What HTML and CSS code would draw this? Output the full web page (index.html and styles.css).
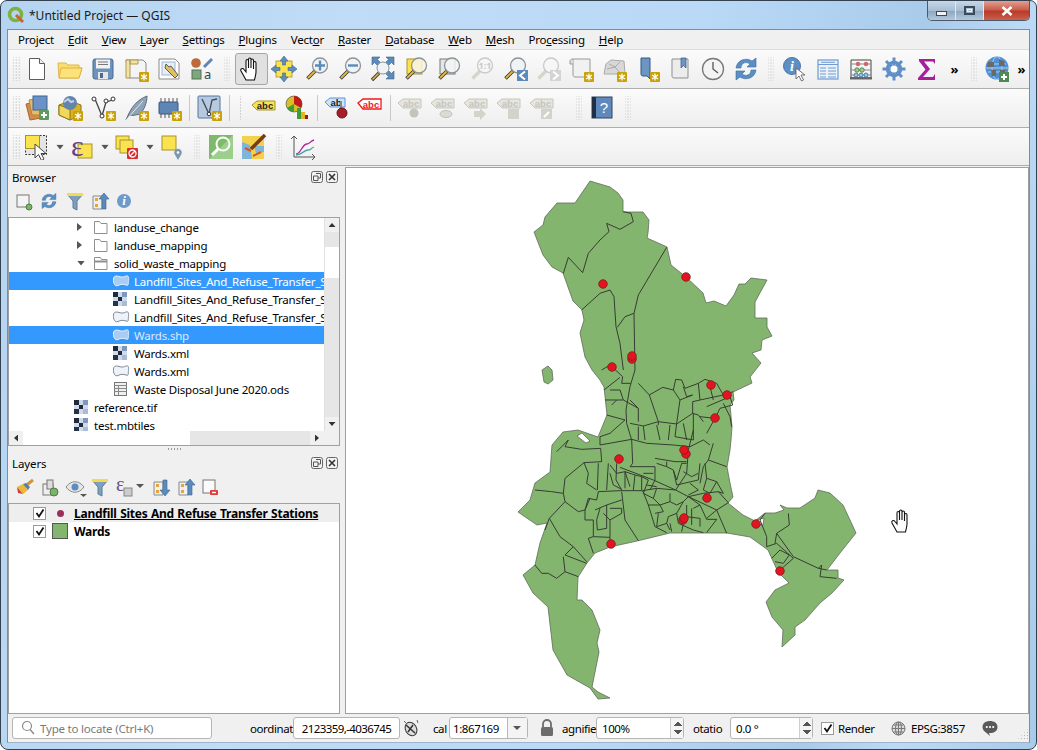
FILE: index.html
```html
<!DOCTYPE html>
<html lang="en">
<head>
	<meta charset="utf-8"/>
	<title>*Untitled Project — QGIS</title>
	<link rel="stylesheet" href="styles.css">
</head>
<body>
<svg class="defs" width="0" height="0">
	<symbol id="badge"><rect x="16" y="16" width="10" height="10" rx="1" fill="#c9a108"/><path d="M21 17.5v7M18 19l6 4M24 19l-6 4" stroke="#fff" stroke-width="1.3"/></symbol>
	<symbol id="lens"><path d="M11 15L3.5 22.5" stroke="#3a3a3a" stroke-width="3.6"/><path d="M10.5 15.5L4 22" stroke="#e6b93c" stroke-width="1.8"/><circle cx="16" cy="9.5" r="7.5" fill="#f0f3f4" stroke="#8d9499" stroke-width="1.3"/></symbol>
	<symbol id="lens-off"><path d="M11 15L3.5 22.5" stroke="#d5d5cc" stroke-width="3.4"/><circle cx="16" cy="9.5" r="7.5" fill="#f6f6f6" stroke="#c9c9c9" stroke-width="1.3"/></symbol>
	<symbol id="new"><path d="M5.5 2.5h10l5 5v16h-15z" fill="#fff" stroke="#5c5c5c"/><path d="M15.5 2.5v5h5" fill="#eee" stroke="#5c5c5c"/></symbol>
	<symbol id="open"><path d="M2 22L1 7h8l2 2h11v3l3 0-3 10z" fill="#fbdc6c" stroke="#dcb54a"/><path d="M2 22l2-10h21l-3 10z" fill="#fde27a" stroke="#dcb54a"/></symbol>
	<symbol id="save"><rect x="3" y="3" width="20" height="20" rx="2" fill="#6b93bd" stroke="#4a6a8f"/><rect x="6" y="3.5" width="14" height="9" fill="#f2f2f2"/><path d="M8 6h10M8 8.5h10" stroke="#777"/><rect x="8" y="16" width="10" height="7" fill="#e6e6e6"/><rect x="10" y="17" width="3" height="5" fill="#4a6a8f"/></symbol>
	<symbol id="layout"><path d="M3 4h17l3 3v15H6z" fill="#f4f4f4" stroke="#8a8a8a"/><path d="M3 4h4v18H3zM7 4h8v4H7z" fill="#f4e2a0" stroke="#a89a5c"/><use href="#badge"/></symbol>
	<symbol id="manager"><path d="M3 3h16l4 4v16H3z" fill="#fff" stroke="#8a8a8a"/><rect x="6" y="6" width="13" height="13" fill="#e6eef7" stroke="#9cb7d8"/><path d="M10 8l3 3 2-1 7 9-3 3-8-8-2-2z" fill="#e0c060" stroke="#5a5a5a"/></symbol>
	<symbol id="style"><circle cx="7" cy="7" r="4.8" fill="#bd6a3a"/><path d="M15 11L23 3" stroke="#5b86b8" stroke-width="3"/><rect x="3" y="14" width="9" height="9" fill="#7ea77a" stroke="#55705a"/><text x="15" y="23" class="icon-a">a</text></symbol>
	<symbol id="hand"><path d="M8 24L3 15C2 13 4.500 11.500 6 13.500L8 16V5C8 3 10.500 3 10.500 5V12 3.500C10.500 1.500 13 1.500 13 3.500V12 4.500C13 2.500 15.500 2.500 15.500 4.500V13 7C15.500 5 18 5 18 7V16C18 19 17 21 16.500 24z" fill="#fff" stroke="#111" stroke-width="1.1"/></symbol>
	<symbol id="pansel"><rect x="5" y="5" width="16" height="16" fill="#fbe34f" stroke="#b9a23b"/><path d="M13 0l4 5h-2.500v4h-3V5H9zM13 26l4-5h-2.500v-4h-3v4H9zM0 13l5-4v2.500h4v3H5V17zM26 13l-5-4v2.500h-4v3h4V17z" fill="#5f8dbc" stroke="#3d6690" stroke-width=".6"/></symbol>
	<symbol id="zoomin"><use href="#lens"/><path d="M11 9.500h10M16 4.500v10" stroke="#5b8abb" stroke-width="2.400"/></symbol>
	<symbol id="zoomout"><use href="#lens"/><path d="M11 9.500h10" stroke="#5b8abb" stroke-width="2.400"/></symbol>
	<symbol id="zoomfull"><path d="M2 1h8L7.500 3.500l3 3-3 3-3-3L2 9zM24 1h-8l2.500 2.500-3 3 3 3 3-3L24 9zM24 23h-8l2.500-2.500-3-3 3-3 3 3 2.500-2.500z" fill="#5b8abb" stroke="#3c648e" stroke-width=".6"/><path d="M2 24l7-7" stroke="#3a3a3a" stroke-width="3.400"/><path d="M2.500 23.500l6-6" stroke="#e6b93c" stroke-width="1.600"/><circle cx="13" cy="12" r="6" fill="#f0f3f4" stroke="#8d9499"/></symbol>
	<symbol id="zoomsel"><rect x="4" y="3" width="15" height="15" fill="#fbe34f" stroke="#a99434"/><path d="M11 15L3.500 22.500" stroke="#3a3a3a" stroke-width="3.600"/><path d="M10.500 15.500L4 22" stroke="#e6b93c" stroke-width="1.800"/><circle cx="16" cy="9.500" r="7.500" fill="#f6f5e8" fill-opacity=".85" stroke="#8d9499" stroke-width="1.300"/></symbol>
	<symbol id="zoomlayer"><rect x="4" y="3" width="15" height="15" fill="#e6e6e6" stroke="#777"/><path d="M11 15L3.500 22.500" stroke="#3a3a3a" stroke-width="3.600"/><path d="M10.500 15.500L4 22" stroke="#e6b93c" stroke-width="1.800"/><circle cx="16" cy="9.500" r="7.500" fill="#f3f4f4" fill-opacity=".85" stroke="#8d9499" stroke-width="1.300"/></symbol>
	<symbol id="zoom11"><use href="#lens-off"/><text x="16" y="13" class="icon-one">1:1</text></symbol>
	<symbol id="zoomlast"><use href="#lens"/><rect x="15" y="14" width="11" height="11" fill="#5b8abb"/><path d="M23 15.500l-5 4 5 4" fill="none" stroke="#fff" stroke-width="2"/></symbol>
	<symbol id="zoomnext"><use href="#lens-off"/><rect x="15" y="14" width="11" height="11" fill="#d4d4d4"/><path d="M18 15.500l5 4-5 4" fill="none" stroke="#fff" stroke-width="2"/></symbol>
	<symbol id="mapview"><path d="M5 3h17v18H7c-2 0-2-2-2-2z" fill="#f1f1f1" stroke="#999"/><path d="M5 3c-2 0-3 1-3 2v3h3" fill="#ddd" stroke="#999"/><use href="#badge"/></symbol>
	<symbol id="view3d"><path d="M5 8l5-4 13 1 1 13H3z" fill="#d8d8d8" stroke="#aaa"/><path d="M8 8l6 3 5-5M6 13l8-2 5 6" fill="none" stroke="#aaa"/><use href="#badge"/></symbol>
	<symbol id="bmnew"><path d="M7 2h9v21l-3-3H9c-2 0-2-2-2-2z" fill="#6a95c4" stroke="#39567a"/><use href="#badge"/></symbol>
	<symbol id="bmshow"><path d="M5 3h16v19H7c-2 0-2-2-2-2z" fill="#ececec" stroke="#8f8f8f"/><path d="M14 2h5v10l-2.500-2.500L14 12z" fill="#6a95c4" stroke="#39567a" stroke-width=".7"/></symbol>
	<symbol id="clock"><circle cx="13" cy="13" r="10.500" fill="#f3f3f3" stroke="#777" stroke-width="1.300"/><path d="M13 6v7l5 4" fill="none" stroke="#555" stroke-width="1.300"/></symbol>
	<symbol id="refresh"><path d="M3 12C4 4 13 1 19 5L23 2v9h-9l3-3C13 5 8 7 8 12z" fill="#5a8fc6" stroke="#39699c" stroke-width=".6"/><path d="M23 14C22 22 13 25 7 21L3 24v-9h9l-3 3c4 3 9 1 9-4z" fill="#5a8fc6" stroke="#39699c" stroke-width=".6"/></symbol>
	<symbol id="identify"><circle cx="10" cy="10" r="8.500" fill="#5e8fc4" stroke="#4a76a6"/><text x="10" y="15" class="icon-i">i</text><path d="M14 12v11l3-3 2.500 5 2-1-2.500-5h4z" fill="#fff" stroke="#555" stroke-width=".8"/></symbol>
	<symbol id="table"><rect x="3" y="4" width="20" height="19" fill="#eaf1f9" stroke="#6f9bd0" stroke-width="1.200"/><path d="M3 8.500h20M6 6.300h14M5 12h6M13 12h8M5 15h6M13 15h8M5 18h6M13 18h8M5 21h6M13 21h8" stroke="#6f9bd0"/></symbol>
	<symbol id="abacus"><path d="M3 4h20v19M3 4v19" fill="none" stroke="#444"/><rect x="2" y="21" width="22" height="2.500" fill="#666"/><path d="M3 8h20M3 14h20M3 19h20" stroke="#888"/><circle cx="10" cy="8" r="2.200" fill="#d9616b"/><circle cx="18" cy="8" r="2.200" fill="#d9616b"/><circle cx="9" cy="14" r="2.200" fill="#9ecb8e" stroke="#5a8a4e"/><circle cx="14" cy="14" r="2.200" fill="#9ecb8e" stroke="#5a8a4e"/><circle cx="8" cy="19" r="2" fill="#9ec3e6" stroke="#4e7ea8"/><circle cx="13" cy="19" r="2" fill="#9ec3e6" stroke="#4e7ea8"/><circle cx="18" cy="19" r="2" fill="#9ec3e6" stroke="#4e7ea8"/></symbol>
	<symbol id="gear"><circle cx="13" cy="13" r="6.500" fill="none" stroke="#5f8fc6" stroke-width="3.500"/><path d="M13 1.500v23M1.500 13h23M5 5l16 16M21 5L5 21" stroke="#5f8fc6" stroke-width="3"/><circle cx="13" cy="13" r="3.500" fill="#fff"/></symbol>
	<symbol id="sigma"><path d="M5 3h16v5l-2-2.500H10l6 7.500-7 8h10l2-3v6H4v-2l7.500-8.500L5 5z" fill="#a61e9b"/></symbol>
	<symbol id="globe"><circle cx="12" cy="12" r="11.500" fill="#4f90d8"/><path d="M3 8h18M1 12h22M3 16h18" stroke="#a6cdf0"/><ellipse cx="12" cy="12" rx="5" ry="11.500" fill="none" stroke="#a6cdf0"/><path d="M3 6h6v5H2zM14 3l5 2 1 5h-6zM6 14h5v6H7zM15 14h6l-3 6h-3z" fill="#6d6a62"/><rect x="14" y="16" width="10" height="10" fill="#4e8a52"/><path d="M19 18v6M16 21h6" stroke="#fff" stroke-width="2"/></symbol>
	<symbol id="datasrc"><path d="M2 9l12-3 3 17-11 2z" fill="#d48a4a" stroke="#a8642c"/><path d="M5 5l12-2 3 17H8z" fill="#e7b968" stroke="#b08a3c"/><rect x="9" y="1" width="14" height="14" fill="#6a92c4" stroke="#3f6595"/><rect x="15" y="15" width="10" height="10" rx="1" fill="#5d9a5d"/><path d="M20 17v6M17 20h6" stroke="#fff" stroke-width="2"/></symbol>
	<symbol id="gpkg"><path d="M2 10l11-4 11 4v10l-11 5-11-5z" fill="#d8b324" stroke="#8e7412"/><path d="M13 14L2 10v10l11 5z" fill="#f1d75c" stroke="#8e7412"/><circle cx="13" cy="8" r="7" fill="#6385ad"/><path d="M7 7l4-3 3 3 3-1" fill="none" stroke="#c3d3e3" stroke-width="2"/><use href="#badge"/></symbol>
	<symbol id="vnode"><path d="M5 4l7 17 4-14 7-2" fill="none" stroke="#444" stroke-width="1.300"/><circle cx="4" cy="4" r="2" fill="#fff" stroke="#333"/><circle cx="12" cy="21" r="2" fill="#fff" stroke="#333"/><circle cx="16" cy="6" r="2" fill="#fff" stroke="#333"/><circle cx="23" cy="4" r="2" fill="#fff" stroke="#333"/><use href="#badge"/></symbol>
	<symbol id="feather"><path d="M3 25C8 12 14 5 24 1c0 7-3 14-7 18-4 1-8 2-11 1z" fill="#8ea3b8" stroke="#5c6c7c"/><path d="M3 25L20 6" stroke="#dfe6ec"/><use href="#badge"/></symbol>
	<symbol id="chip"><rect x="3" y="7" width="19" height="12" rx="1" fill="#5d86b5" stroke="#34567e"/><path d="M5 7V3M9 7V3M13 7V3M17 7V3M21 7V3M5 23v-4M9 23v-4M13 23v-4M17 23v-4" stroke="#555"/><use href="#badge"/></symbol>
	<symbol id="vbox"><rect x="2" y="1" width="22" height="22" rx="1" fill="#b7c9de" stroke="#54779e"/><path d="M6 4l7 15 3-14 5-1" fill="none" stroke="#3d4a58" stroke-width="1.300"/><circle cx="13" cy="19" r="1.800" fill="#fff" stroke="#333"/><use href="#badge"/></symbol>
	<symbol id="abc"><path d="M1 10l5-4h18v9H6z" fill="#fbe34f" stroke="#a69330"/><text x="14" y="14" class="icon-abc">abc</text></symbol>
	<symbol id="pie"><circle cx="10" cy="9" r="8" fill="#d8bf28" stroke="#444" stroke-width=".6"/><path d="M10 9V1a8 8 0 0 1 7 12z" fill="#c01a1a"/><path d="M10 9l-7 4a8 8 0 0 0 7 4z" fill="#3d9c38"/><rect x="13" y="13" width="4" height="11" fill="#3d9c38"/><rect x="17" y="17" width="4" height="7" fill="#e4b422"/><rect x="21" y="20" width="3" height="4" fill="#a01818"/></symbol>
	<symbol id="abpin"><path d="M1 7l5-4h15v9H6z" fill="#cfe3f7" stroke="#5b95d5"/><text x="12" y="11" class="icon-ab">ab</text><path d="M17 6v8" stroke="#888" stroke-width="2"/><circle cx="18" cy="18" r="5" fill="#a41f2a" stroke="#6e1016"/></symbol>
	<symbol id="abcred"><path d="M1 8l5-4h18v10H6z" fill="#fff" stroke="#ef1a1a" stroke-width="1.300"/><text x="14" y="13" class="icon-abcr">abc</text></symbol>
	<symbol id="ghost"><path d="M1 8l5-4h18v9H6z" fill="#e6e6df" stroke="#c6c6bf"/><text x="14" y="12" class="icon-ghost">abc</text></symbol>
	<symbol id="help"><rect x="2" y="2" width="20" height="21" fill="#5f89bd" stroke="#30455f"/><rect x="2" y="2" width="4" height="21" fill="#1f2f44"/><text x="14" y="18" class="icon-q">?</text></symbol>
	<symbol id="select"><rect x="1.500" y="1.500" width="21" height="19" fill="#e4e4e4" stroke="#333" stroke-dasharray="2 1.500"/><rect x="1.500" y="1.500" width="14" height="13" fill="#fbe34f" stroke="#a69330"/><path d="M11 10v14l3.500-3.500 3 6 2.500-1.500-3-5.500h5z" fill="#fff" stroke="#444"/></symbol>
	<symbol id="eps"><rect x="9" y="10" width="14" height="14" fill="#fbe34f" stroke="#a69330"/><text x="2" y="22" class="icon-eps">ε</text></symbol>
	<symbol id="deselect"><rect x="2" y="2" width="13" height="13" fill="#fbe34f" stroke="#a69330"/><rect x="6" y="6" width="13" height="13" fill="#fbe34f" stroke="#a69330"/><rect x="13" y="14" width="11" height="11" rx="1" fill="#d92c2c"/><circle cx="18.500" cy="19.500" r="3.500" fill="none" stroke="#fff" stroke-width="1.300"/><path d="M16 22l5-5" stroke="#fff" stroke-width="1.300"/></symbol>
	<symbol id="locsel"><rect x="3" y="2" width="14" height="14" fill="#fbe34f" stroke="#a69330"/><path d="M19 26l-3.500-6a3.800 3.800 0 1 1 7 0z" fill="#7d98ae"/><circle cx="19" cy="18.500" r="1.300" fill="#fff"/></symbol>
	<symbol id="mzoom"><rect x="1" y="1" width="24" height="24" fill="#7dbb6a"/><path d="M1 25L25 1v24z" fill="#9ccf8c"/><circle cx="15" cy="10" r="6.500" fill="none" stroke="#fff" stroke-width="2"/><path d="M10 15l-6 6" stroke="#fff" stroke-width="3"/></symbol>
	<symbol id="mtip"><rect x="1" y="2" width="22" height="23" fill="#f2d24c"/><path d="M1 8l8 3 2 14H1zM13 12h10v6l-8 1z" fill="#7fb5d8"/><path d="M4 14l6 3M12 22l8-4" stroke="#d8561c" stroke-width="2"/><path d="M10 15L24 1" stroke="#7a3a16" stroke-width="3.500"/></symbol>
	<symbol id="chart"><path d="M4 2v21h21" fill="none" stroke="#555"/><path d="M1 5l3-3 3 3M22 20l3 3-3 3" fill="none" stroke="#555"/><path d="M6 20c5 0 6-10 11-10 3 0 3-3 7-4" fill="none" stroke="#b0249c" stroke-width="1.300"/><path d="M6 21c6 0 8-5 12-5 3 0 3-2 6-3" fill="none" stroke="#3ea8a8" stroke-width="1.300"/></symbol>
	<symbol id="folder"><path d="M1.500 13.500V1.500h5l1.500 2h6v10z" fill="#fff" stroke="#8f8f8f"/></symbol>
	<symbol id="folderopen"><path d="M1.500 13.500V1.500h6l1 2h5.500v10z" fill="#fff" stroke="#8f8f8f"/><path d="M1.500 5.500h12.500" stroke="#8f8f8f" stroke-width="2"/></symbol>
	<symbol id="blob"><path d="M1.500 5C1.500 2 4 1.500 7 2.500S12 3 14 2s3 1 2.500 4.500S17 12 14 11s-5-1-8 .5S1 9 1.500 5z" fill="#eef3fa" stroke="#7f8a98"/></symbol>
	<symbol id="blobsel"><path d="M1.500 5C1.500 2 4 1.500 7 2.500S12 3 14 2s3 1 2.500 4.500S17 12 14 11s-5-1-8 .5S1 9 1.500 5z" fill="#a9cdf2" stroke="#e3eefb"/></symbol>
	<symbol id="check"><rect width="14" height="14" fill="#cfdaea"/><rect width="5" height="5" fill="#1f2a3c"/><rect x="9" y="0" width="5" height="5" fill="#7f99bd"/><rect x="5" y="5" width="4" height="4" fill="#1f2a3c"/><rect x="0" y="9" width="5" height="5" fill="#26324a"/><rect x="9" y="9" width="5" height="5" fill="#a8bcd6"/></symbol>
	<symbol id="sheet"><rect x="1.500" y=".5" width="12" height="13" fill="#efefef" stroke="#777"/><path d="M1.500 3.500h12M1.500 6.500h12M1.500 9.500h12M5.500 3.500v10" stroke="#888"/></symbol>
	<symbol id="float"><rect x=".5" y=".5" width="11" height="11" rx="2" fill="#f2f2f2" stroke="#666"/><path d="M5 2.500h4.500V7H7M2.500 5H7v4.500H2.500z" fill="none" stroke="#555"/></symbol>
	<symbol id="close"><rect x=".5" y=".5" width="11" height="11" rx="2" fill="#f2f2f2" stroke="#666"/><path d="M3 3l6 6M9 3l-6 6" stroke="#333" stroke-width="1.600"/></symbol>
</svg>

<div class="window">
	<header class="titlebar">
		<svg class="logo" width="18" height="18" viewBox="0 0 18 18"><circle cx="8.500" cy="8.500" r="6" fill="none" stroke="#7fb23a" stroke-width="3.600"/><path d="M9 9l7 7" stroke="#c8662a" stroke-width="3"/></svg>
		<span class="title">*Untitled Project — QGIS</span>
		<div class="winbtns">
			<div class="winbtn"><span class="min-glyph"></span></div>
			<div class="winbtn"><span class="max-glyph"></span></div>
			<div class="winbtn winclose"><svg width="12" height="10" viewBox="0 0 12 10"><path d="M1.500 1l9 8M10.500 1l-9 8" stroke="#fff" stroke-width="2.600"/></svg></div>
		</div>
	</header>

	<div class="client">
		<nav class="menubar">
			<span class="menu">Pro<u>j</u>ect</span>
			<span class="menu"><u>E</u>dit</span>
			<span class="menu"><u>V</u>iew</span>
			<span class="menu"><u>L</u>ayer</span>
			<span class="menu"><u>S</u>ettings</span>
			<span class="menu"><u>P</u>lugins</span>
			<span class="menu">Vect<u>o</u>r</span>
			<span class="menu"><u>R</u>aster</span>
			<span class="menu"><u>D</u>atabase</span>
			<span class="menu"><u>W</u>eb</span>
			<span class="menu"><u>M</u>esh</span>
			<span class="menu">Pro<u>c</u>essing</span>
			<span class="menu"><u>H</u>elp</span>
		</nav>

		<div class="toolbar">
			<i class="handle first"></i>
			<div class="tb"><svg class="ic"><use href="#new"/></svg></div>
			<div class="tb"><svg class="ic"><use href="#open"/></svg></div>
			<div class="tb"><svg class="ic"><use href="#save"/></svg></div>
			<div class="tb"><svg class="ic"><use href="#layout"/></svg></div>
			<div class="tb"><svg class="ic"><use href="#manager"/></svg></div>
			<div class="tb"><svg class="ic"><use href="#style"/></svg></div>
			<i class="handle"></i>
			<div class="tb pressed"><svg class="ic"><use href="#hand"/></svg></div>
			<div class="tb"><svg class="ic"><use href="#pansel"/></svg></div>
			<div class="tb"><svg class="ic"><use href="#zoomin"/></svg></div>
			<div class="tb"><svg class="ic"><use href="#zoomout"/></svg></div>
			<div class="tb"><svg class="ic"><use href="#zoomfull"/></svg></div>
			<div class="tb"><svg class="ic"><use href="#zoomsel"/></svg></div>
			<div class="tb"><svg class="ic"><use href="#zoomlayer"/></svg></div>
			<div class="tb"><svg class="ic"><use href="#zoom11"/></svg></div>
			<div class="tb"><svg class="ic"><use href="#zoomlast"/></svg></div>
			<div class="tb"><svg class="ic"><use href="#zoomnext"/></svg></div>
			<div class="tb"><svg class="ic"><use href="#mapview"/></svg></div>
			<div class="tb"><svg class="ic"><use href="#view3d"/></svg></div>
			<div class="tb"><svg class="ic"><use href="#bmnew"/></svg></div>
			<div class="tb"><svg class="ic"><use href="#bmshow"/></svg></div>
			<div class="tb"><svg class="ic"><use href="#clock"/></svg></div>
			<div class="tb"><svg class="ic"><use href="#refresh"/></svg></div>
			<i class="handle"></i>
			<div class="tb"><svg class="ic"><use href="#identify"/></svg></div>
			<div class="tb"><svg class="ic"><use href="#table"/></svg></div>
			<div class="tb"><svg class="ic"><use href="#abacus"/></svg></div>
			<div class="tb"><svg class="ic"><use href="#gear"/></svg></div>
			<div class="tb"><svg class="ic"><use href="#sigma"/></svg></div>
			<b class="more">»</b>
			<i class="handle"></i>
			<div class="tb"><svg class="ic"><use href="#globe"/></svg></div>
			<b class="more last">»</b>
		</div>

		<div class="toolbar">
			<i class="handle first"></i>
			<div class="tb"><svg class="ic"><use href="#datasrc"/></svg></div>
			<div class="tb"><svg class="ic"><use href="#gpkg"/></svg></div>
			<div class="tb"><svg class="ic"><use href="#vnode"/></svg></div>
			<div class="tb"><svg class="ic"><use href="#feather"/></svg></div>
			<div class="tb"><svg class="ic"><use href="#chip"/></svg></div>
			<i class="sep"></i>
			<div class="tb"><svg class="ic"><use href="#vbox"/></svg></div>
			<i class="sep"></i>
			<i class="handle short"></i>
			<div class="tb"><svg class="ic"><use href="#abc"/></svg></div>
			<div class="tb"><svg class="ic"><use href="#pie"/></svg></div>
			<i class="sep"></i>
			<div class="tb"><svg class="ic"><use href="#abpin"/></svg></div>
			<div class="tb"><svg class="ic"><use href="#abcred"/></svg></div>
			<i class="sep"></i>
			<div class="tb off"><svg class="ic"><use href="#ghost"/><circle cx="17" cy="18" r="4.500" fill="#c4c4bd"/></svg></div>
			<div class="tb off"><svg class="ic"><use href="#ghost"/><ellipse cx="16" cy="19" rx="6" ry="3.500" fill="#dcdcd6" stroke="#c0c0ba"/></svg></div>
			<div class="tb off"><svg class="ic"><use href="#ghost"/><path d="M11 16h6v-3l6 6-6 6v-3h-6z" fill="#d3d3cc"/></svg></div>
			<div class="tb off"><svg class="ic"><use href="#ghost"/><rect x="12" y="14" width="11" height="10" fill="#d3d3cc"/></svg></div>
			<div class="tb off"><svg class="ic"><use href="#ghost"/><rect x="12" y="14" width="11" height="10" fill="#d3d3cc"/><path d="M15 22l5-5" stroke="#fff" stroke-width="2"/></svg></div>
			<div class="gap-help"></div>
			<i class="handle"></i>
			<div class="tb"><svg class="ic"><use href="#help"/></svg></div>
			<i class="handle"></i>
		</div>

		<div class="toolbar toolbar-last">
			<i class="handle first"></i>
			<div class="tb"><svg class="ic"><use href="#select"/></svg></div>
			<i class="caret"></i>
			<div class="tb"><svg class="ic"><use href="#eps"/></svg></div>
			<i class="caret"></i>
			<div class="tb"><svg class="ic"><use href="#deselect"/></svg></div>
			<i class="caret"></i>
			<div class="tb"><svg class="ic"><use href="#locsel"/></svg></div>
			<i class="handle"></i>
			<div class="tb"><svg class="ic"><use href="#mzoom"/></svg></div>
			<div class="tb"><svg class="ic"><use href="#mtip"/></svg></div>
			<i class="handle"></i>
			<div class="tb"><svg class="ic"><use href="#chart"/></svg></div>
		</div>

		<main class="workspace">
			<aside class="docks">
				<section class="dock dock-browser">
					<div class="dock-title"><span>Browser</span><svg class="dk"><use href="#float"/></svg><svg class="dk"><use href="#close"/></svg></div>
					<div class="dock-tools">
						<svg class="sm"><rect x="2" y="3" width="12" height="12" fill="#f4f4f4" stroke="#777"/><circle cx="14" cy="15" r="3" fill="#7cb36a" stroke="#4e7d44"/></svg>
						<svg class="sm" viewBox="0 0 26 26"><use href="#refresh"/></svg>
						<svg class="sm"><path d="M2 2h16l-6 7v9l-4-2V9z" fill="#7f9fc0" stroke="#5c7c9c"/><rect x="2" y="1" width="16" height="3" fill="#f5d94e"/></svg>
						<svg class="sm"><path d="M3 4h9v13H3z" fill="none" stroke="#888"/><rect x="5" y="6" width="3" height="3" fill="#e8a33a"/><rect x="5" y="12" width="3" height="3" fill="#e8a33a"/><path d="M14 1l5 6h-3v10h-4V7H9z" fill="#5b8abb" stroke="#3c648e" stroke-width=".6"/></svg>
						<svg class="sm"><circle cx="9" cy="9" r="7" fill="#6d9ac9"/><text x="9" y="13" class="icon-i2">i</text></svg>
					</div>
					<div class="treebox">
						<div class="tree">
							<div class="row lvl-folder"><i class="arrow"></i><svg class="ti"><use href="#folder"/></svg><span>landuse_change</span></div>
							<div class="row lvl-folder"><i class="arrow"></i><svg class="ti"><use href="#folder"/></svg><span>landuse_mapping</span></div>
							<div class="row lvl-folder"><i class="arrow down"></i><svg class="ti"><use href="#folderopen"/></svg><span>solid_waste_mapping</span></div>
							<div class="row lvl-file selected"><svg class="ti wide"><use href="#blobsel"/></svg><span>Landfill_Sites_And_Refuse_Transfer_Stations.shp</span></div>
							<div class="row lvl-file"><svg class="ti wide"><use href="#check" x="1"/></svg><span>Landfill_Sites_And_Refuse_Transfer_Stations.xml</span></div>
							<div class="row lvl-file"><svg class="ti wide"><use href="#blob"/></svg><span>Landfill_Sites_And_Refuse_Transfer_Stations.xml</span></div>
							<div class="row lvl-file selected"><svg class="ti wide"><use href="#blobsel"/></svg><span class="dim">Wards.shp</span></div>
							<div class="row lvl-file"><svg class="ti wide"><use href="#check" x="1"/></svg><span>Wards.xml</span></div>
							<div class="row lvl-file"><svg class="ti wide"><use href="#blob"/></svg><span>Wards.xml</span></div>
							<div class="row lvl-file"><svg class="ti wide"><use href="#sheet" x="1"/></svg><span>Waste Disposal June 2020.ods</span></div>
							<div class="row lvl-top"><svg class="ti"><use href="#check"/></svg><span>reference.tif</span></div>
							<div class="row lvl-top"><svg class="ti"><use href="#check"/></svg><span>test.mbtiles</span></div>
						</div>
						<div class="vscroll">
							<div class="sbtn"><i class="tri up"></i></div>
							<div class="vtrack-a"></div>
							<div class="vthumb"></div>
							<div class="vtrack-b"></div>
							<div class="sbtn"><i class="tri dn"></i></div>
						</div>
						<div class="hscroll">
							<div class="sbtn"><i class="tri lf"></i></div>
							<div class="hthumb"></div>
							<div class="htrack"></div>
							<div class="sbtn"><i class="tri rt"></i></div>
						</div>
						<div class="corner"></div>
					</div>
				</section>
				<div class="splitter"><i></i></div>
				<section class="dock dock-layers">
					<div class="dock-title"><span>Layers</span><svg class="dk"><use href="#float"/></svg><svg class="dk"><use href="#close"/></svg></div>
					<div class="dock-tools">
						<svg class="sm"><path d="M9 9L18 2" stroke="#c79a3c" stroke-width="3"/><path d="M2 9l6-3 5 6-5 4z" fill="#e8b93a"/><path d="M2 9l6 7-5-1z" fill="#d43c3c"/><path d="M8 6l5 6 2-3-4-4z" fill="#5c7cb0"/></svg>
						<svg class="sm"><rect x="3" y="6" width="10" height="11" fill="#eee" stroke="#777"/><rect x="7" y="2" width="6" height="9" fill="#ddd" stroke="#777"/><circle cx="14" cy="14" r="4" fill="#7cb36a" stroke="#4e7d44"/></svg>
						<svg class="sm sm-wide"><path d="M1 9c5-7 13-7 18 0-5 7-13 7-18 0z" fill="#e6e6e6" stroke="#8c8c8c"/><circle cx="10" cy="9" r="3.500" fill="#5e8cc0"/><path d="M15 16h7l-3.500 3z" fill="#555"/></svg>
						<svg class="sm"><path d="M2 2h16l-6 7v9l-4-2V9z" fill="#7f9fc0" stroke="#5c7c9c"/><rect x="2" y="1" width="16" height="3" fill="#f5d94e"/></svg>
						<svg class="sm sm-wide2"><text x="1" y="13" class="icon-eps2">ε</text><rect x="9" y="10" width="8" height="8" fill="#ccc" stroke="#888"/><path d="M21 6h8l-4 4z" fill="#555"/></svg>
						<svg class="sm"><path d="M3 4h9v13H3z" fill="none" stroke="#888"/><rect x="5" y="6" width="3" height="3" fill="#e8a33a"/><rect x="5" y="12" width="3" height="3" fill="#e8a33a"/><path d="M14 18l5-6h-3V2h-4v10H9z" fill="#5b8abb" stroke="#3c648e" stroke-width=".6"/></svg>
						<svg class="sm"><path d="M3 4h9v13H3z" fill="none" stroke="#888"/><rect x="5" y="6" width="3" height="3" fill="#e8a33a"/><rect x="5" y="12" width="3" height="3" fill="#e8a33a"/><path d="M14 1l5 6h-3v10h-4V7H9z" fill="#5b8abb" stroke="#3c648e" stroke-width=".6"/></svg>
						<svg class="sm"><rect x="2" y="2" width="12" height="13" fill="#fafafa" stroke="#777"/><rect x="9" y="12" width="8" height="5" rx="1" fill="#e53a3a"/><path d="M11 14.500h4" stroke="#fff" stroke-width="1.400"/></svg>
					</div>
					<div class="layertree">
						<div class="lrow current">
							<label class="cb"><svg width="12" height="12" viewBox="0 0 12 12"><path d="M2.500 6l2.500 3.500 4.500-7" fill="none" stroke="#111" stroke-width="1.800"/></svg></label>
							<span class="ldot-wrap"><i class="ldot"></i></span>
							<span class="lname active">Landfill Sites And Refuse Transfer Stations</span>
						</div>
						<div class="lrow">
							<label class="cb"><svg width="12" height="12" viewBox="0 0 12 12"><path d="M2.500 6l2.500 3.500 4.500-7" fill="none" stroke="#111" stroke-width="1.800"/></svg></label>
							<span class="ldot-wrap"><i class="lswatch"></i></span>
							<span class="lname">Wards</span>
						</div>
					</div>
				</section>
			</aside>

			<div class="canvas">
				<svg class="map" viewBox="346 168 682 545">
					<path class="land" d="M590 181L610 187 618 193 623 200 623 212 643 212 649 220 648 233 647 238 667 247 671 265 686 277 703 293 706 303 714 301 726 306 734 295 739 284 745 284 751 278 767 280 755 302 755 318 767 318 767 327 772 336 762 340 761 350 752 353 761 363 750 377 752 383 733 392 734 400 730 405 732 427 731 440 730 450 727 467 730 483 733 497 728 503 743 515 755 521 765 513 775 513 784 510 780 505 787 508 800 508 815 498 818 490 830 493 843 505 856 533 840 553 827 570 838 570 838 578 844 580 832 593 820 603 805 620 795 627 795 635 782 647 783 630 772 617 766 602 775 590 789 583 778 572 768 550 750 537 727 533 703 533 670 533 637 541 610 547 595 553 587 563 578 577 577 600 582 600 592 610 600 630 597 643 599 652 592 687 598 692 610 698 598 699 590 688 567 675 553 650 548 607 533 593 523 575 535 565 540 543 547 523 537 525 518 512 530 500 535 483 550 472 552 445 563 432 578 430 598 437 607 415 604 387 600 380 592 370 585 357 580 333 584 320 582 310 573 301 563 273 552 267 543 255 534 232 543 225 545 217 557 203 575 203z"/>
					<path class="land" d="M542 370L548 366 552 370 553 380 548 384 544 382z"/>
					<path class="inlet" d="M577 436L582 433 590 441 586 443z"/>
					<path class="inlet" d="M757 520L764 518 763 525 758 524z"/>
					<g class="wards" transform="translate(510 170) scale(.33333)">
						<path d="M160 310L175 262 218 308 235 250 270 210 297 185 290 160 330 178 370 155 363 130 340 125"/>
						<path d="M215 420L270 370 300 360 312 380 318 470 330 520 340 600"/>
						<path d="M470 232L385 375 372 430 375 600 360 650 348 720 350 760 365 810"/>
						<path d="M372 430L345 440 322 472"/>
						<path d="M275 600L300 585 338 620 335 640 362 640"/>
						<path d="M282 660L330 622M285 690L340 690 385 715 385 755M305 705L320 690"/>
						<path d="M290 735L345 750 300 790 270 800"/>
						<path d="M385 640L418 675 445 755 445 765"/>
						<path d="M418 675L458 652 490 660 510 690 500 760"/>
						<path d="M490 660L497 628 515 630 525 655 565 640 585 628 620 640 640 675"/>
						<path d="M565 640L570 690 548 695 548 730 565 735 580 755"/>
						<path d="M510 690L548 675M570 690L640 675 670 665"/>
						<path d="M590 710L660 680 668 705 630 715 615 745 590 790"/>
						<path d="M360 760L400 768 445 755 500 762 548 730"/>
						<path d="M385 770L385 810M440 765L450 810M500 760L495 800 550 810M550 730L550 810"/>
						<path d="M300 660L330 660 340 690M360 690L385 715M520 650L530 680 548 675M600 650L610 690"/>
						<path d="M640 700L660 740 665 770M570 740L615 745M400 768L405 810M480 765L475 810M520 760L530 810"/>
					</g>
					<g class="wards" transform="translate(510 430) scale(.33333)">
						<path d="M140 65L175 30 165 50 215 58M270 20L270 45 365 28 410 40 490 45 540 50 580 30 600 45"/>
						<path d="M365 28L368 100 360 110 435 110 435 150 420 180"/>
						<path d="M215 58L272 55 275 95 222 98 165 145 160 190 125 185 75 180"/>
						<path d="M165 215L205 245 225 240 235 205 260 210 265 185 330 182 398 182"/>
						<path d="M160 190L165 215 118 265 150 320 190 350 165 375 230 400"/>
						<path d="M335 185L345 270 385 332M190 350L230 395M160 380L165 425 205 440"/>
						<path d="M165 425L140 445 115 430 95 430 75 405M118 265L105 300"/>
						<path d="M225 240L225 270 250 270 250 320 235 325 250 370M250 320L300 322 300 345"/>
						<path d="M262 300L290 295 290 225 335 210M255 240L290 225M300 270L335 250 335 235 300 235"/>
						<path d="M222 98L235 130 230 160 260 180M265 100L262 180M295 100L290 180M320 100L318 150 335 180"/>
						<path d="M330 112L430 150 497 180 535 200 620 240 655 218"/>
						<path d="M550 0L535 60 530 130 497 180 440 175 398 182"/>
						<path d="M345 125L345 175M375 135L370 180M395 140L395 180M415 150L400 190 430 205 440 175"/>
						<path d="M398 182L415 225 435 290 470 308"/>
						<path d="M435 250L460 245 450 225 480 215 480 190M440 290L470 280 480 300M475 260L500 250 520 215 535 200"/>
						<path d="M480 280L485 305M500 250L505 280 550 300 580 308M530 225L530 260 570 265 570 290M545 235L545 285"/>
						<path d="M570 225L590 268 620 268 590 308M590 265L620 240 650 310"/>
						<path d="M590 145L580 180 600 190 620 155 590 145M535 200L580 190 625 185 655 218"/>
						<path d="M570 100L565 150 500 165M540 160L565 180 535 195M490 120L500 150 515 100 530 100M435 85L495 95 530 95"/>
						<path d="M610 40L595 90 580 110 570 160M595 90L650 110"/>
						<path d="M765 250L750 270 770 320 770 350 800 340 850 385 810 420M835 250L838 285 800 310 795 340"/>
						<path d="M800 310L850 380 925 415 935 405 930 440 980 445"/>
						<path d="M785 385L810 360 838 375 820 400 795 395M925 415L950 420"/>
						<path d="M300 130L310 165 335 178M345 125L360 170M300 105L320 130 345 125 375 135 395 140 415 150"/>
						<path d="M400 130L430 130M410 165L440 170M500 165L490 120 470 110 470 95M440 100L470 110"/>
						<path d="M520 125L545 140 565 130M585 100L590 145M620 155L640 190 625 185"/>
						<path d="M430 205L450 225M415 225L450 225M445 250L440 290M480 215L500 225 520 215M470 280L475 260"/>
						<path d="M520 280L515 305M550 235L570 225 535 200M240 205L225 240M270 235L260 270 262 300M280 250L300 270 300 322"/>
					</g>
					<g class="points">
						<circle cx="603" cy="284" r="4.300"/><circle cx="686" cy="277" r="4.300"/><circle cx="612" cy="367" r="4.300"/><circle cx="632" cy="359" r="4.300"/><circle cx="632" cy="356" r="4.300"/><circle cx="711" cy="385" r="4.300"/><circle cx="727" cy="395" r="4.300"/><circle cx="715" cy="418" r="4.300"/><circle cx="686" cy="454" r="4.300"/><circle cx="684" cy="450" r="4.300"/><circle cx="619" cy="459" r="4.300"/><circle cx="707" cy="498" r="4.300"/><circle cx="683" cy="520" r="4.300"/><circle cx="684" cy="518" r="4.300"/><circle cx="756" cy="524" r="4.300"/><circle cx="611" cy="544" r="4.300"/><circle cx="780" cy="571" r="4.300"/>
					</g>
					<use href="#hand" x="889" y="508" width="20" height="26"/>
				</svg>
			</div>
		</main>

		<footer class="statusbar">
			<div class="locator">
				<svg width="16" height="16" viewBox="0 0 16 16"><circle cx="7" cy="6" r="4.500" fill="none" stroke="#8a8a8a" stroke-width="1.200"/><path d="M10 9.500l4 4.500" stroke="#8a8a8a" stroke-width="1.400"/></svg>
				<span>Type to locate (Ctrl+K)</span>
			</div>
			<span class="slabel s-coord">oordinat</span>
			<div class="field f-coord">2123359,-4036745</div>
			<svg class="s-mouse" width="18" height="18" viewBox="0 0 18 18"><ellipse cx="9" cy="10" rx="5.500" ry="7" transform="rotate(-30 9 10)" fill="#ddd" stroke="#333"/><path d="M4 6l9 8M6 13l5-7" stroke="#333" stroke-width="1.500"/><path d="M15 1l1 3M2 2l2 2" stroke="#666"/></svg>
			<span class="slabel s-scale">cal</span>
			<div class="field f-scale"><span>1:867169</span><i class="combo-btn"></i></div>
			<svg class="s-lock" width="14" height="18" viewBox="0 0 14 18"><path d="M3 8V5a4 4 0 0 1 8 0v3" fill="none" stroke="#6c6c6c" stroke-width="1.800"/><rect x="1" y="8" width="12" height="9" rx="1.500" fill="#6c6c6c"/></svg>
			<span class="slabel s-mag">agnifie</span>
			<div class="field f-spin f-mag"><span>100%</span><i class="spin"></i></div>
			<span class="slabel s-rot">otatio</span>
			<div class="field f-spin f-rot"><span>0.0 °</span><i class="spin"></i></div>
			<label class="cb s-cb"><svg width="12" height="12" viewBox="0 0 12 12"><path d="M2.500 6l2.500 3.500 4.500-7" fill="none" stroke="#111" stroke-width="1.800"/></svg></label>
			<span class="slabel s-render">Render</span>
			<svg class="s-globe" width="15" height="15" viewBox="0 0 15 15"><circle cx="7.500" cy="7.500" r="6.500" fill="#ddd" stroke="#777"/><path d="M1 7.500h13M7.500 1v13M2.500 4h10M2.500 11h10" stroke="#777"/><ellipse cx="7.500" cy="7.500" rx="3" ry="6.500" fill="none" stroke="#777"/></svg>
			<span class="slabel s-epsg">EPSG:3857</span>
			<svg class="s-chat" width="16" height="16" viewBox="0 0 16 16"><path d="M8 1c4 0 7.500 2 7.500 6S12 13 8 13l-1 0 1 3-4-3.500C2 11.500.5 9.500.5 7 .5 3 4 1 8 1z" fill="#5a5a5a"/><circle cx="4.800" cy="7" r="1.100" fill="#fff"/><circle cx="8" cy="7" r="1.100" fill="#fff"/><circle cx="11.200" cy="7" r="1.100" fill="#fff"/></svg>
			<i class="grip"></i>
		</footer>
	</div>
</div>
</body>
</html>
```

FILE: styles.css
```css
* {
	box-sizing: border-box;
}
html, body {
	margin: 0;
	height: 100%;
	background: #fff;
}
body {
	font-family: "Noto Sans", sans-serif;
	font-size: 12px;
	color: #000;
	overflow: hidden;
}
svg {
	display: block;
	flex: none;
}
svg.defs {
	display: none;
}
.window {
	width: 1037px;
	height: 750px;
	display: flex;
	flex-direction: column;
	padding: 0 6px 6px 6px;
	border: 1px solid #34414f;
	border-radius: 7px 7px 8px 8px;
	background: linear-gradient(100deg, #b4d4f1 0%, #c0dcf6 30%, #b9d9f7 60%, #a9cbea 80%, #bcdaf5 88%, #a8cbea 100%);
}
.titlebar {
	height: 28px;
	flex: none;
	display: flex;
	align-items: center;
}
.logo {
	margin: 0 4px 0 0;
}
.title {
	font-size: 12px;
	color: #1a1a1a;
}
.winbtns {
	margin-left: auto;
	align-self: flex-start;
	display: flex;
	height: 20px;
	border: 1px solid #4a5a6a;
	border-top: 0;
	border-radius: 0 0 5px 5px;
	overflow: hidden;
}
.winbtn {
	width: 28px;
	display: flex;
	align-items: center;
	justify-content: center;
	background: linear-gradient(#c6d8e8, #a7bdd2 50%, #8ea8c0 55%, #b3c8dc);
	border-right: 1px solid #e0e8f0;
}
.winclose {
	width: 45px;
	border-right: 0;
	background: linear-gradient(#e2a090, #c9604e 45%, #bb3a28 55%, #c9604e);
}
.min-glyph {
	width: 11px;
	height: 5px;
	margin-top: 6px;
	border: 1px solid #3c4a58;
	background: #f0f4f8;
}
.max-glyph {
	width: 11px;
	height: 9px;
	border: 2px solid #3c4a58;
	outline: 1px solid #eef3f8;
	outline-offset: -4px;
}
.client {
	flex: 1;
	min-height: 0;
	display: flex;
	flex-direction: column;
	background: #f0f0f0;
	border: 1px solid #7c8d9e;
	border-bottom-color: #9fb4c8;
}
.menubar {
	height: 20px;
	flex: none;
	display: flex;
	align-items: center;
	padding-left: 10px;
	background: #f0f0f0;
	border-bottom: 1px solid #dcdcdc;
	font-size: 11.500px;
	letter-spacing: -.22px;
	white-space: nowrap;
}
.menu {
	margin-right: 14px;
}
.toolbar {
	height: 39px;
	flex: none;
	display: flex;
	align-items: center;
	padding-left: 4px;
	background: linear-gradient(#fbfbfb, #eeeeee);
	border-bottom: 1px solid #adadad;
	white-space: nowrap;
}
.toolbar-last {
	height: 38px;
}
.tb {
	width: 33px;
	height: 32px;
	flex: none;
	display: flex;
	align-items: center;
	justify-content: center;
}
.tb.pressed {
	background: #e0e0e0;
	border: 1px solid #a6a6a6;
	border-radius: 3px;
}
.ic {
	width: 26px;
	height: 26px;
	overflow: visible;
}
.handle {
	flex: none;
	width: 16px;
	height: 24px;
	background-image: radial-gradient(circle, #b0b0b0 .7px, transparent .8px);
	background-size: 3px 3px;
	background-position: center;
	background-repeat: repeat;
	background-clip: content-box;
	padding: 0 5px;
}
.handle.first {
	width: 8.500px;
	padding: 0 0 0 1px;
}
.handle.short {
	width: 15px;
}
.sep {
	flex: none;
	width: 7px;
	height: 26px;
	background: linear-gradient(#c8c8c8, #c8c8c8) center / 1px 100% no-repeat;
}
.caret {
	flex: none;
	width: 12px;
	height: 6px;
	background: #555;
	clip-path: polygon(10% 0, 90% 0, 50% 100%);
	transform: scale(.8);
}
.more {
	flex: none;
	width: 22px;
	text-align: center;
	font-size: 13px;
	font-weight: 700;
	line-height: 1;
}
.more.last {
	width: 14px;
}
.gap-help {
	flex: none;
	width: 12px;
}
.icon-a {
	font: 13px "Noto Sans", sans-serif;
	fill: #444;
}
.icon-one {
	font: bold 9px "Noto Sans", sans-serif;
	fill: #c8c8c8;
	text-anchor: middle;
}
.icon-i {
	font: italic bold 14px "Liberation Serif", serif;
	fill: #fff;
	text-anchor: middle;
}
.icon-i2 {
	font: italic bold 13px "Liberation Serif", serif;
	fill: #fff;
	text-anchor: middle;
}
.icon-abc, .icon-ab, .icon-abcr, .icon-ghost {
	font: bold 9.500px "Liberation Sans", sans-serif;
	text-anchor: middle;
}
.icon-abc {
	fill: #222;
}
.icon-ab {
	fill: #222;
}
.icon-abcr {
	fill: #ef1a1a;
}
.icon-ghost {
	fill: #c4c4bd;
}
.icon-q {
	font: 15px "Liberation Sans", sans-serif;
	fill: #fff;
	text-anchor: middle;
}
.icon-eps {
	font: 30px "Liberation Serif", serif;
	fill: #6a3d8c;
}
.icon-eps2 {
	font: 20px "Liberation Serif", serif;
	fill: #6a4d86;
}
.workspace {
	flex: 1;
	min-height: 0;
	display: flex;
}
.docks {
	width: 332px;
	flex: none;
	display: flex;
	flex-direction: column;
	margin-right: 5px;
}
.dock-browser {
	height: 280px;
	flex: none;
	display: flex;
	flex-direction: column;
}
.dock-layers {
	flex: 1;
	min-height: 0;
	display: flex;
	flex-direction: column;
}
.dock-title {
	height: 22px;
	flex: none;
	display: flex;
	align-items: center;
	gap: 3px;
	padding: 0 2px 0 4px;
}
.dock-title span {
	flex: 1;
	font-size: 11.500px;
	letter-spacing: -.1px;
}
.dk {
	width: 12px;
	height: 12px;
}
.dock-tools {
	height: 29px;
	flex: none;
	display: flex;
	align-items: center;
	gap: 7px;
	padding: 0 0 3px 7px;
}
.sm {
	width: 18px;
	height: 18px;
	overflow: visible;
}
.sm-wide2 {
	margin-right: 11px;
}
.treebox {
	flex: 1;
	min-height: 0;
	display: grid;
	grid-template-columns: 315px 15px;
	grid-template-rows: 1fr 14px;
	background: #fff;
	border: 1px solid #a0a0a0;
}
.tree {
	overflow: hidden;
	min-height: 0;
}
.row {
	height: 18px;
	display: flex;
	align-items: center;
	white-space: nowrap;
	overflow: hidden;
	font-size: 11.500px;
	letter-spacing: -.2px;
}
.row.selected {
	background: #3399ff;
	color: #fff;
}
.dim {
	color: #dbeafe;
}
.lvl-folder {
	padding-left: 68px;
}
.lvl-file {
	padding-left: 103px;
}
.lvl-top {
	padding-left: 65px;
}
.lvl-top .ti {
	margin-right: 5px;
}
.arrow {
	flex: none;
	width: 5px;
	height: 8px;
	margin-right: 11px;
	background: #555;
	clip-path: polygon(0 0, 100% 50%, 0 100%);
}
.arrow.down {
	width: 8px;
	height: 5px;
	margin: 0 8px 0 0;
	clip-path: polygon(0 0, 100% 0, 50% 100%);
}
.ti {
	width: 15px;
	height: 15px;
	margin-right: 6px;
}
.ti.wide {
	width: 18px;
	height: 14px;
	margin-right: 4px;
	overflow: visible;
}
.vscroll {
	display: flex;
	flex-direction: column;
	background: #f0f0f0;
	border-left: 1px solid #e0e0e0;
}
.sbtn {
	width: 14px;
	height: 14px;
	flex: none;
	display: flex;
	align-items: center;
	justify-content: center;
	background: #f0f0f0;
}
.vtrack-a {
	height: 15px;
	flex: none;
	background: #e6e6e6;
}
.vthumb {
	height: 31px;
	flex: none;
	background: #fff;
}
.vtrack-b {
	flex: 1;
	background: #e6e6e6;
}
.tri {
	width: 7px;
	height: 4px;
	background: #333;
}
.tri.up {
	clip-path: polygon(50% 0, 100% 100%, 0 100%);
}
.tri.dn {
	clip-path: polygon(0 0, 100% 0, 50% 100%);
}
.tri.lf, .tri.rt {
	width: 4px;
	height: 7px;
}
.tri.lf {
	clip-path: polygon(100% 0, 100% 100%, 0 50%);
}
.tri.rt {
	clip-path: polygon(0 0, 100% 50%, 0 100%);
}
.hscroll {
	display: flex;
	background: #f0f0f0;
}
.hthumb {
	width: 167px;
	flex: none;
	background: #fff;
}
.htrack {
	flex: 1;
	background: #e6e6e6;
}
.corner {
	background: #f0f0f0;
}
.splitter {
	height: 6px;
	flex: none;
	display: flex;
	align-items: center;
	justify-content: center;
}
.splitter i {
	width: 15px;
	height: 2px;
	background-image: radial-gradient(circle, #999 .7px, transparent .8px);
	background-size: 3px 2px;
}
.layertree {
	flex: 1;
	min-height: 0;
	background: #fff;
	border: 1px solid #a0a0a0;
}
.lrow {
	height: 18px;
	display: flex;
	align-items: center;
	padding-left: 24px;
}
.lrow.current {
	background: #eeeeee;
}
.cb {
	width: 13px;
	height: 13px;
	flex: none;
	display: flex;
	align-items: center;
	justify-content: center;
	background: #fff;
	border: 1px solid #9a9a9a;
}
.ldot-wrap {
	width: 16px;
	height: 16px;
	flex: none;
	margin: 0 6px 0 6px;
	display: flex;
	align-items: center;
	justify-content: center;
}
.ldot {
	width: 7px;
	height: 7px;
	border-radius: 50%;
	background: #99305c;
}
.lswatch {
	width: 16px;
	height: 16px;
	background: #84b56e;
	border: 1px solid #555;
}
.lname {
	font-weight: 700;
	letter-spacing: -.25px;
	word-spacing: .6px;
	white-space: nowrap;
}
.lname.active {
	text-decoration: underline;
}
.canvas {
	flex: 1;
	min-width: 0;
	margin-top: 1px;
	background: #fff;
	border: 1px solid #a0a0a0;
}
.map {
	width: 100%;
	height: 100%;
	overflow: hidden;
}
.land {
	fill: #84b56e;
	stroke: #5f6b5a;
	stroke-width: .8;
	stroke-linejoin: round;
}
.inlet {
	fill: #fff;
	stroke: #444;
	stroke-width: .6;
}
.wards path {
	fill: none;
	stroke: #353c32;
	stroke-width: 3;
	stroke-linejoin: round;
}
.points circle {
	fill: #e3131f;
	stroke: #7c2020;
	stroke-width: .8;
}
.statusbar {
	height: 28px;
	flex: none;
	display: flex;
	align-items: center;
	padding: 0 0 0 4px;
	white-space: nowrap;
	font-size: 11.500px;
	letter-spacing: -.4px;
}
.locator {
	width: 200px;
	height: 22px;
	flex: none;
	display: flex;
	align-items: center;
	gap: 4px;
	padding-left: 7px;
	background: #fff;
	border: 1px solid #b5b5b5;
	border-radius: 3px;
	color: #7a7a7a;
	letter-spacing: -.2px;
}
.slabel {
	flex: none;
}
.s-coord {
	width: 39px;
	margin-left: 38px;
}
.field {
	height: 22px;
	flex: none;
	display: flex;
	align-items: center;
	justify-content: space-between;
	background: #fff;
	border: 1px solid #b5b5b5;
	border-radius: 3px;
	padding-left: 5px;
}
.f-coord {
	width: 107px;
	margin-left: 4px;
	justify-content: center;
	padding: 0;
	letter-spacing: -.6px;
}
.s-mouse {
	margin-left: 2px;
}
.s-scale {
	width: 11px;
	margin-left: 13px;
}
.f-scale {
	width: 79px;
	margin-left: 5px;
	padding-left: 3px;
}
.combo-btn {
	width: 20px;
	height: 20px;
	flex: none;
	border-left: 1px solid #b5b5b5;
	background: #f4f4f4;
	position: relative;
}
.combo-btn::after {
	content: "";
	position: absolute;
	left: 5px;
	top: 8px;
	width: 8px;
	height: 4px;
	background: #555;
	clip-path: polygon(0 0, 100% 0, 50% 100%);
}
.s-lock {
	margin-left: 12px;
}
.s-mag {
	width: 31px;
	margin-left: 8px;
}
.f-mag {
	width: 88px;
	margin-left: 3px;
}
.f-rot {
	width: 83px;
	margin-left: 9px;
}
.s-rot {
	width: 28px;
	margin-left: 9px;
}
.spin {
	width: 13px;
	height: 20px;
	flex: none;
	border-left: 1px solid #cfcfcf;
	background:
		linear-gradient(to bottom right, transparent 49%, #555 50%) 3px 4px / 4px 4px no-repeat,
		linear-gradient(to bottom left, transparent 49%, #555 50%) 7px 4px / 4px 4px no-repeat,
		linear-gradient(to top right, transparent 49%, #555 50%) 3px 12px / 4px 4px no-repeat,
		linear-gradient(to top left, transparent 49%, #555 50%) 7px 12px / 4px 4px no-repeat,
		#f4f4f4;
}
.s-cb {
	margin-left: 8px;
}
.s-render {
	width: 35px;
	margin-left: 4px;
}
.s-globe {
	margin-left: 18px;
}
.s-epsg {
	width: 53px;
	margin-left: 5px;
}
.s-chat {
	margin-left: 18px;
}
.grip {
	flex: none;
	width: 12px;
	height: 12px;
	margin: 12px 0 0 auto;
	background-image: radial-gradient(circle, #b5b5b5 .7px, transparent .8px);
	background-size: 3px 3px;
	clip-path: polygon(100% 0, 100% 100%, 0 100%);
}
```
